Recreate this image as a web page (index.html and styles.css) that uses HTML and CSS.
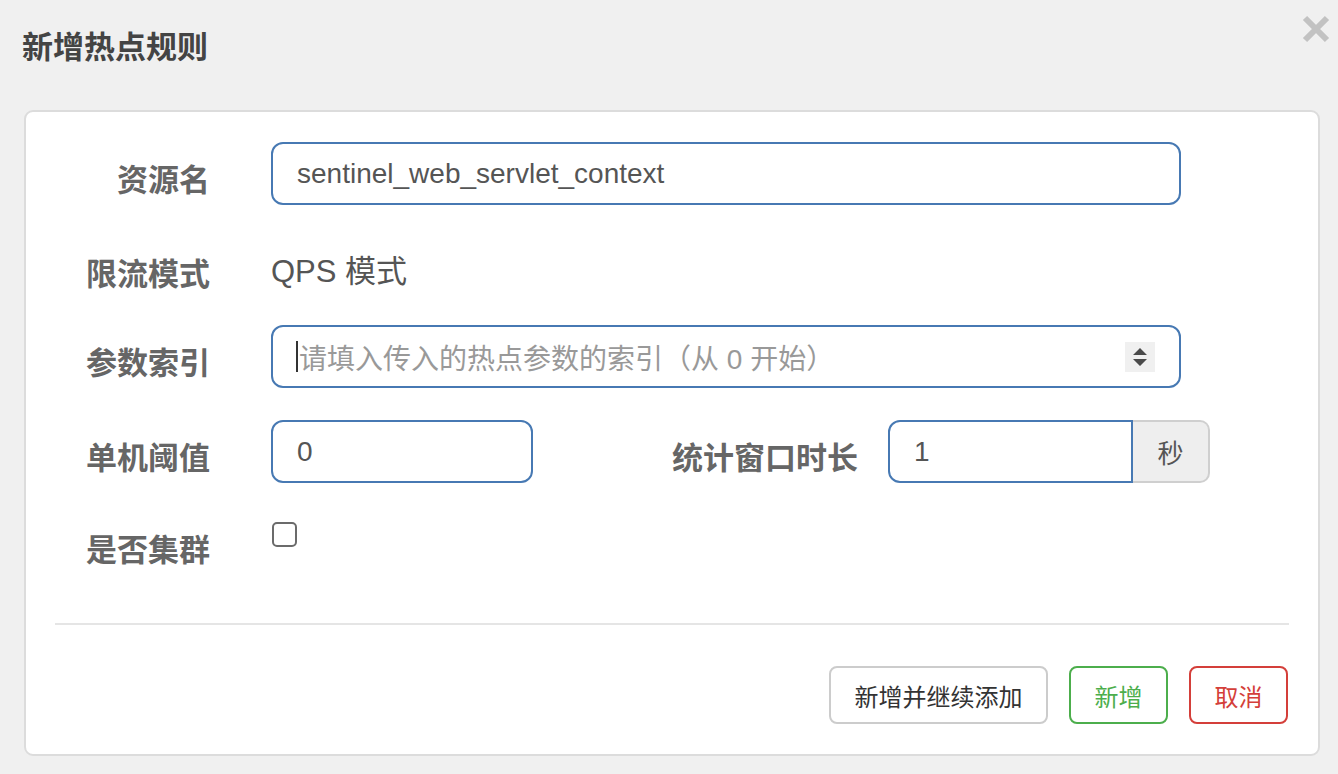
FILE: index.html
```html
<!DOCTYPE html>
<html lang="zh">
<head>
<meta charset="utf-8">
<title>新增热点规则</title>
<link rel="stylesheet" href="styles.css">
</head>
<body>
<div class="modal">
  <div class="modal-header">
    <h3 class="title">新增热点规则</h3>
    <span class="close" aria-label="关闭">
      <svg width="28" height="28" viewBox="0 0 28 28"><path d="M3 3 L25 25 M25 3 L3 25" stroke="#c2c2c2" stroke-width="6" stroke-linecap="butt" fill="none"/></svg>
    </span>
  </div>
  <div class="card">
    <div class="row">
      <label class="label">资源名</label>
      <div class="control full"><span class="value">sentinel_web_servlet_context</span></div>
    </div>
    <div class="row row-static">
      <label class="label">限流模式</label>
      <div class="static">QPS 模式</div>
    </div>
    <div class="row">
      <label class="label">参数索引</label>
      <div class="control full number">
        <span class="caret"></span><span class="placeholder">请填入传入的热点参数的索引（从 0 开始）</span>
        <span class="spinner">
          <svg width="30" height="30" viewBox="0 0 30 30"><path d="M8 13 L15 6 L22 13 Z M8 17 L22 17 L15 24 Z" fill="#4a4a4a"/></svg>
        </span>
      </div>
    </div>
    <div class="row">
      <label class="label">单机阈值</label>
      <div class="control small"><span class="value">0</span></div>
      <label class="label label2">统计窗口时长</label>
      <div class="group">
        <div class="control grouped"><span class="value">1</span></div>
        <span class="addon">秒</span>
      </div>
    </div>
    <div class="row row-check">
      <label class="label">是否集群</label>
      <span class="checkbox"></span>
    </div>
    <div class="divider"></div>
    <div class="actions">
      <button class="btn btn-default">新增并继续添加</button>
      <button class="btn btn-success">新增</button>
      <button class="btn btn-danger">取消</button>
    </div>
  </div>
</div>
</body>
</html>
```

FILE: styles.css
```css
* { box-sizing: border-box; }
html, body {
  margin: 0;
  padding: 0;
  background: #f0f0f0;
}
body {
  font-family: "Liberation Sans", "Noto Sans CJK SC", sans-serif;
  color: #555;
  width: 1338px;
  height: 774px;
  overflow: hidden;
}
.modal {
  padding: 0 18px 0 24px;
}
.modal-header {
  height: 110px;
  display: flex;
  justify-content: space-between;
  align-items: flex-start;
  position: relative;
}
.title {
  margin: 0;
  margin-left: -2px;
  padding-top: 24px;
  font-size: 31px;
  line-height: 42px;
  font-weight: bold;
  color: #444;
  font-family: "Noto Sans CJK SC", sans-serif;
}
.close {
  margin-top: 15px;
  margin-right: -10px;
  width: 28px;
  height: 28px;
  display: block;
}
.close svg { display: block; }
.card {
  width: 1296px;
  background: #fff;
  border: 2px solid #dcdcdc;
  border-radius: 9px;
  padding: 30px 29px 30px 29px;
}
.row {
  display: flex;
  align-items: flex-start;
  margin-bottom: 32px;
  height: 63px;
}
.row-static { height: 56px; }
.row-check { height: 54px; margin-bottom: 0; }
.label {
  width: 155px;
  text-align: right;
  font-family: "Noto Sans CJK SC", sans-serif;
  font-weight: bold;
  font-size: 31px;
  line-height: 42px;
  padding-top: 15px;
  color: #666;
  flex-shrink: 0;
  white-space: nowrap;
}
.row-static .label { padding-top: 14px; }
.row-check .label { padding-top: 12px; }
.label2 { width: 325px; margin-right: 30px; }
.control {
  height: 63px;
  border: 2px solid #4779b3;
  border-radius: 12px;
  padding: 0 24px;
  display: flex;
  align-items: center;
  font-size: 28px;
  color: #555;
  position: relative;
  flex-shrink: 0;
}
.full { width: 910px; margin-left: 61px; }
.small { width: 262px; margin-left: 61px; }
.static {
  margin-left: 61px;
  padding-top: 14px;
  line-height: 42px;
  font-size: 31px;
  color: #555;
  font-family: "Liberation Sans", "Noto Sans CJK SC", sans-serif;
}
.value { font-family: "Liberation Sans", "Noto Sans CJK SC", sans-serif; }
.caret {
  display: inline-block;
  width: 2px;
  height: 31px;
  background: #333;
  margin-left: -1px;
  margin-right: 1px;
}
.placeholder {
  color: #999;
  font-size: 28px;
  font-family: "Liberation Sans", "Noto Sans CJK SC", sans-serif;
}
.spinner {
  position: absolute;
  right: 24px;
  top: 15px;
  width: 30px;
  height: 30px;
  background: #f0f0f0;
}
.spinner svg { display: block; }
.group {
  display: flex;
  width: 322px;
  height: 63px;
}
.grouped {
  width: 245px;
  border-radius: 12px 0 0 12px;
}
.addon {
  width: 77px;
  height: 63px;
  background: #eeeeee;
  border: 2px solid #cfcfcf;
  border-left: none;
  border-radius: 0 10px 10px 0;
  display: flex;
  align-items: center;
  justify-content: center;
  font-size: 26px;
  color: #555;
  font-family: "Noto Sans CJK SC", sans-serif;
}
.checkbox {
  display: block;
  width: 25px;
  height: 25px;
  margin-left: 62px;
  margin-top: 7px;
  border: 2px solid #6b6b6b;
  border-radius: 5px;
  background: #fff;
}
.divider {
  height: 2px;
  background: #e5e5e5;
  margin-top: 54px;
}
.actions {
  display: flex;
  justify-content: flex-end;
  gap: 21px;
  margin-top: 41px;
  padding-right: 1px;
}
.btn {
  height: 58px;
  border-radius: 8px;
  border: 2px solid #ccc;
  background: #fff;
  font-family: "Noto Sans CJK SC", sans-serif;
  font-size: 24px;
  padding: 0;
  display: flex;
  align-items: center;
  justify-content: center;
  cursor: pointer;
}
.btn-default { width: 219px; color: #333; }
.btn-success { width: 99px; color: #4cae4c; border-color: #4cae4c; }
.btn-danger { width: 99px; color: #d43f3a; border-color: #d43f3a; }
```
